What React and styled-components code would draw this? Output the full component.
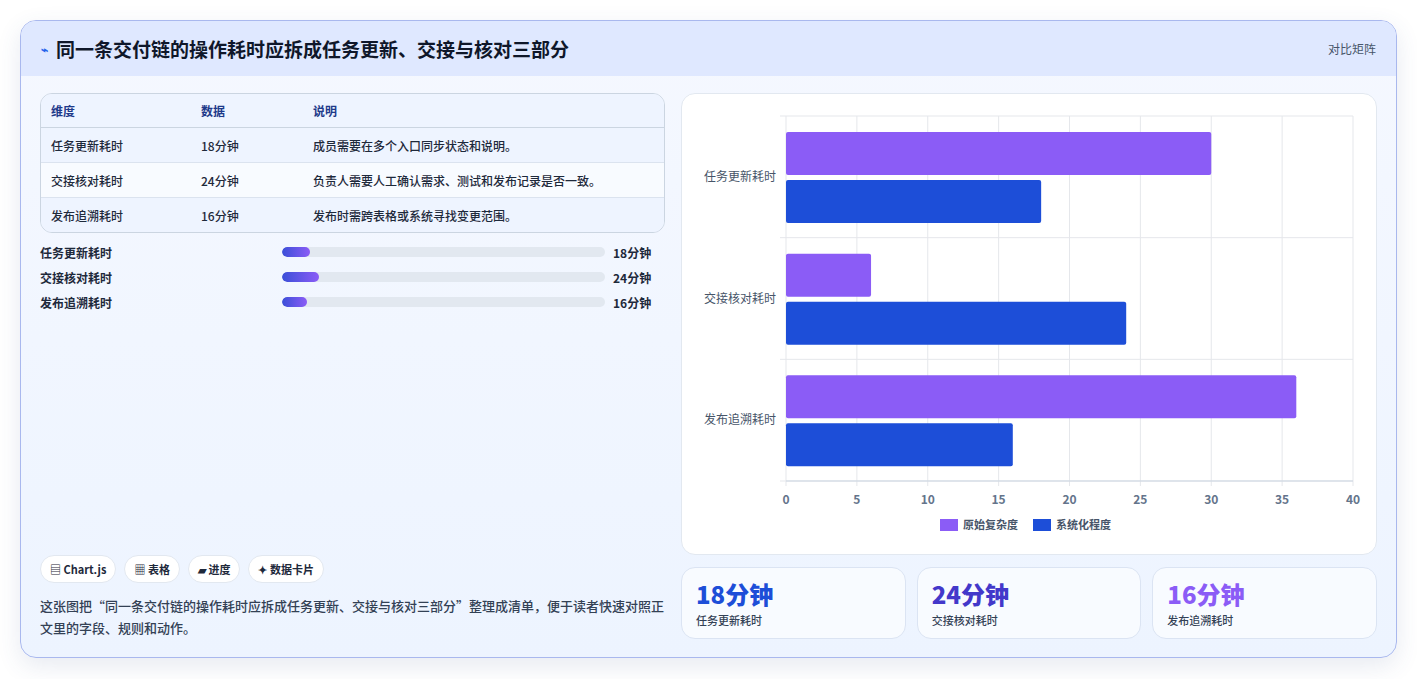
import React from "react";
import styled, { createGlobalStyle } from "styled-components";

const G = createGlobalStyle`
  body{margin:0;background:#fff;font-family:"Noto Sans CJK SC","Noto Sans",sans-serif;}
`;
const Page = styled.div`padding:20px 20px 21px 20px;height:679px;box-sizing:border-box;`;
const Card = styled.div`height:638px;box-sizing:border-box;border:1px solid #a9b8ee;border-radius:16px;background:linear-gradient(180deg,#f5f8ff,#edf4ff);box-shadow:0 8px 24px rgba(60,80,140,.12);overflow:hidden;display:flex;flex-direction:column;`;
const Header = styled.div`height:55px;flex:none;background:#dfe8ff;display:flex;align-items:center;justify-content:space-between;padding:0 20px;`;
const Title = styled.h1`margin:0;font-size:19px;font-weight:700;color:#0f172a;display:flex;align-items:center;gap:8px;`;
const Tag = styled.span`font-size:12px;color:#475569;`;
const Body = styled.div`flex:1;display:flex;gap:16px;padding:17px 19px 18px 19px;min-height:0;`;
const Left = styled.div`width:628px;display:flex;flex-direction:column;justify-content:space-between;`;
const Right = styled.div`flex:1;display:flex;flex-direction:column;gap:12px;`;
const Table = styled.table`width:100%;border-collapse:separate;border-spacing:0;border:1px solid #cbd5e1;border-radius:12px;overflow:hidden;font-size:12px;`;
const Th = styled.th`text-align:left;font-weight:700;color:#1e3a8a;padding:0 10px;height:33px;background:#eef4ff;border-bottom:1px solid #cbd5e1;width:${p=>p.w||"auto"};`;
const Td = styled.td`padding:0 10px;height:34px;color:#1e293b;font-weight:500;background:${p=>p.alt?"#f8fbff":"#eef4ff"};border-top:${p=>p.first?"none":"1px solid #dbe3ef"};`;
const Bars = styled.div`display:flex;flex-direction:column;gap:7px;margin-top:10px;`;
const BarRow = styled.div`display:grid;grid-template-columns:234px 323px 1fr;align-items:center;column-gap:8px;font-size:12px;font-weight:600;color:#1e293b;height:18px;`;
const Track = styled.div`height:10px;border-radius:5px;background:#e2e8f0;overflow:hidden;`;
const Fill = styled.div`height:100%;border-radius:5px;background:linear-gradient(90deg,#3b4fd8,#8b5cf6);`;
const Chips = styled.div`display:flex;gap:8px;margin-bottom:12px;`;
const Chip = styled.span`font-size:11px;font-weight:600;color:#1e293b;background:#fff;border:1px solid #e2e8f0;border-radius:14px;padding:5px 9px;`;
const Note = styled.p`margin:0;font-size:13px;line-height:22px;color:#334155;font-weight:500;`;
const ChartCard = styled.div`height:460px;background:#fff;border:1px solid #e2e8f0;border-radius:14px;`;
const Stats = styled.div`display:flex;gap:11px;flex:1;`;
const Stat = styled.div`flex:1;background:#f8fbff;border:1px solid #dbe4f3;border-radius:14px;padding:10px 14px;`;
const Big = styled.div`font-size:24px;font-weight:800;color:${p=>p.c};line-height:32px;`;
const Small = styled.div`font-size:11px;color:#334155;font-weight:500;margin-top:2px;`;

const rows=[["任务更新耗时","18分钟","成员需要在多个入口同步状态和说明。",18,30],["交接核对耗时","24分钟","负责人需要人工确认需求、测试和发布记录是否一致。",24,6],["发布追溯耗时","16分钟","发布时需跨表格或系统寻找变更范围。",16,36]];

function Chart(){
  const x0=104,w=567,y0=22,h=365,band=h/3,sc=w/40;
  return <svg width="694" height="460" style={{display:"block"}}>
    {[0,5,10,15,20,25,30,35,40].map(v=><g key={v}>
      <line x1={x0+v*sc} x2={x0+v*sc} y1={y0} y2={y0+h+5} stroke="#e5e7eb"/>
      <text x={x0+v*sc} y={y0+h+23} fontSize="12" fill="#64748b" textAnchor="middle" fontWeight="600">{v}</text></g>)}
    {[0,1,2,3].map(i=><line key={i} x1={x0-6} x2={x0+w} y1={y0+i*band} y2={y0+i*band} stroke="#e5e7eb"/>)}
    <line x1={x0} x2={x0+w} y1={y0+h} y2={y0+h} stroke="#cbd5e1"/>
    {rows.map((r,i)=>{const t=y0+i*band;return <g key={i}>
      <text x={x0-10} y={t+band/2+4} fontSize="12" fill="#475569" textAnchor="end">{r[0]}</text>
      <rect x={x0} y={t+16} width={r[4]*sc} height={43} fill="#8b5cf6" rx="2"/>
      <rect x={x0} y={t+64} width={r[3]*sc} height={43} fill="#1d4ed8" rx="2"/>
    </g>})}
    <rect x="258" y="425" width="18" height="12" fill="#8b5cf6"/>
    <text x="281" y="435" fontSize="11" fill="#475569" fontWeight="600">原始复杂度</text>
    <rect x="351" y="425" width="18" height="12" fill="#1d4ed8"/>
    <text x="374" y="435" fontSize="11" fill="#475569" fontWeight="600">系统化程度</text>
  </svg>;
}

export default function App(){
  return <><G/><Page><Card>
    <Header><Title><span style={{fontSize:12,color:"#2563eb"}}>⌁</span>同一条交付链的操作耗时应拆成任务更新、交接与核对三部分</Title><Tag>对比矩阵</Tag></Header>
    <Body>
      <Left>
        <div>
          <Table><thead><tr><Th w="130px">维度</Th><Th w="92px">数据</Th><Th>说明</Th></tr></thead>
          <tbody>{rows.map((r,i)=><tr key={i}><Td first={i===0} alt={i===1}>{r[0]}</Td><Td first={i===0} alt={i===1}>{r[1]}</Td><Td first={i===0} alt={i===1}>{r[2]}</Td></tr>)}</tbody></Table>
          <Bars>{rows.map((r,i)=><BarRow key={i}><span>{r[0]}</span><Track><Fill style={{width:`${r[3]/207*100}%`}}/></Track><span>{r[1]}</span></BarRow>)}</Bars>
        </div>
        <div>
          <Chips><Chip>▤ Chart.js</Chip><Chip>▦ 表格</Chip><Chip>▰ 进度</Chip><Chip>✦ 数据卡片</Chip></Chips>
          <Note>这张图把“同一条交付链的操作耗时应拆成任务更新、交接与核对三部分”整理成清单，便于读者快速对照正文里的字段、规则和动作。</Note>
        </div>
      </Left>
      <Right>
        <ChartCard><Chart/></ChartCard>
        <Stats>
          <Stat><Big c="#1d4ed8">18分钟</Big><Small>任务更新耗时</Small></Stat>
          <Stat><Big c="#4338ca">24分钟</Big><Small>交接核对耗时</Small></Stat>
          <Stat><Big c="#8b5cf6">16分钟</Big><Small>发布追溯耗时</Small></Stat>
        </Stats>
      </Right>
    </Body>
  </Card></Page></>;
}
